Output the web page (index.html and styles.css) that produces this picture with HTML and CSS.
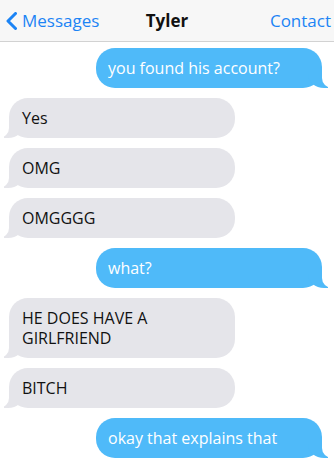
FILE: index.html
```html
<!DOCTYPE html>
<html lang="en">
<head>
    <meta charset="UTF-8">
    <meta name="viewport" content="width=device-width, initial-scale=1.0">
    <title>Tyler</title>
    <link rel="stylesheet" href="styles.css">
</head>
<body>
    <div class="header">
        <a class="back" href="#">
            <svg class="chevron" width="12" height="18" viewBox="0 0 12 18">
                <polyline points="10.5,1.5 3,9 10.5,16.5" fill="none" stroke="currentColor" stroke-width="3" stroke-linecap="round" stroke-linejoin="round"/>
            </svg>
            Messages
        </a>
        <div class="title">Tyler</div>
        <a class="contact" href="#">Contact</a>
    </div>

    <div class="chat">
        <div class="msg sent">you found his account?</div>
        <div class="msg received">Yes</div>
        <div class="msg received">OMG</div>
        <div class="msg received">OMGGGG</div>
        <div class="msg sent">what?</div>
        <div class="msg received">HE DOES HAVE A GIRLFRIEND</div>
        <div class="msg received">BITCH</div>
        <div class="msg sent">okay that explains that</div>
    </div>
</body>
</html>
```
FILE: styles.css
```css
body {
    margin: 0;
    font-family: "Open Sans", Arial, sans-serif;
    background: white;
}
.header {
    display: grid;
    grid-template-columns: 1fr auto 1fr;
    align-items: center;
    height: 41px;
    background-color: #f7f7f7;
    border-bottom: 1px solid #d2d2d2;
    font-size: 17px;
}
.header a {
    color: #1c84f5;
    text-decoration: none;
}
.back {
    display: flex;
    align-items: center;
    gap: 5px;
    padding-left: 5px;
}
.chevron {
    display: block;
}
.title {
    font-weight: bold;
    color: #111;
}
.contact {
    justify-self: end;
    padding-right: 3px;
}
.chat {
    display: flex;
    flex-direction: column;
    gap: 10px;
    padding: 6px 0 10px;
}
.msg {
    position: relative;
    z-index: 0;
    box-sizing: border-box;
    width: 226px;
    padding: 10px 13px;
    border-radius: 19px;
    font-size: 16px;
    line-height: 20px;
}
.sent {
    align-self: flex-end;
    margin-right: 12px;
    background-color: #4fbaf9;
    color: white;
    padding-left: 12px;
}
.received {
    align-self: flex-start;
    margin-left: 9px;
    background-color: #e5e5ea;
    color: #111;
}
.msg::before,
.msg::after {
    content: "";
    position: absolute;
    z-index: -1;
    bottom: 0;
    height: 20px;
}
.sent::before {
    right: -6px;
    width: 20px;
    background-color: #4fbaf9;
    border-bottom-left-radius: 16px 14px;
}
.sent::after {
    right: -10px;
    width: 10px;
    background-color: white;
    border-bottom-left-radius: 10px;
}
.received::before {
    left: -5px;
    width: 20px;
    background-color: #e5e5ea;
    border-bottom-right-radius: 16px 14px;
}
.received::after {
    left: -10px;
    width: 10px;
    background-color: white;
    border-bottom-right-radius: 10px;
}
```
